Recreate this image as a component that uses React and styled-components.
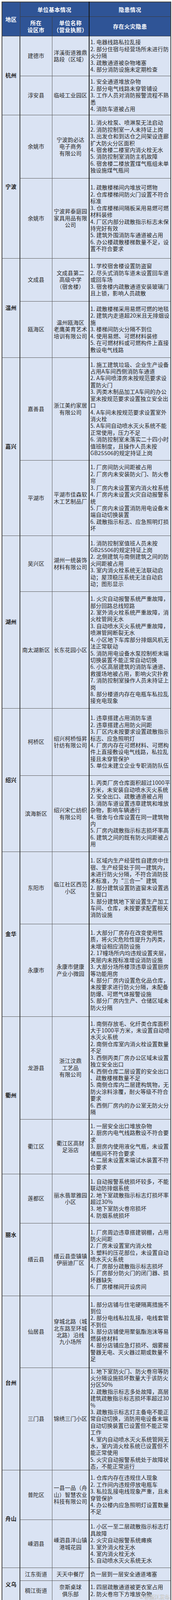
import React from 'react';
import styled, { createGlobalStyle } from 'styled-components';

const GlobalStyle = createGlobalStyle`
  html, body {
    margin: 0;
    padding: 0;
    background: #fff;
  }
  body {
    font-family: "Noto Sans CJK SC", "Liberation Sans", sans-serif;
  }
`;

const Page = styled.div`
  position: relative;
  width: 440px;
  padding: 4px 0 5px 4px;
  box-sizing: border-box;
`;

const Table = styled.table`
  width: 432px;
  border-collapse: collapse;
  table-layout: fixed;
  border: 2px solid #444;
`;

const Col = styled.col`
  width: ${p => p.$w}px;
`;

const Row = styled.tr`
  height: ${p => p.$h}px;
`;

const HeadCell = styled.th`
  background: #2f5496;
  color: #fff;
  font-size: 14px;
  font-weight: 700;
  letter-spacing: 0.5px;
  line-height: 18px;
  text-align: center;
  vertical-align: middle;
  white-space: pre;
  padding: 0;
  border: 1px solid #3b3b3b;
  border-left-width: ${p => (p.$strong ? 2 : 1)}px;
  border-left-color: ${p => (p.$strong ? '#111' : '#3b3b3b')};
`;

const Cell = styled.td`
  background: #dae3f3;
  color: #262626;
  font-size: 14px;
  letter-spacing: 0.25px;
  line-height: 17.4px;
  vertical-align: middle;
  white-space: pre;
  overflow: hidden;
  padding: 0;
  border: 1px solid #585858;
`;

const RegionCell = styled(Cell)`
  font-weight: 700;
  color: #1e1e1e;
  text-align: center;
  border-right: 2px solid #3a3a3a;
`;

const CityCell = styled(Cell)`
  text-align: center;
`;

const UnitCell = styled(Cell)`
  text-align: center;
`;

const IssueCell = styled(Cell)`
  text-align: left;
  padding-left: 2px;
  border-left: 2px solid #111;
`;

const Watermark = styled.div`
  position: absolute;
  right: 6px;
  bottom: 7px;
  display: flex;
  align-items: center;
  gap: 1px;
  font-size: 13px;
  color: rgba(255, 255, 255, 0.85);
  text-shadow: 0 0 1px #8a8a8a, 0 0 1px #8a8a8a;
  pointer-events: none;
`;

const data = [
  {
    region: '杭州',
    rows: [
      {
        h: 102,
        city: '建德市',
        unit: '洋溪街道雅鼎\n路段（区域）',
        issues: '1. 电器线路私拉乱接\n2. 部分住宿与经营场所未进行防\n火分隔\n3. 疏散通道被杂物堵塞\n4. 部分消防设施未定期检查',
      },
      {
        h: 100,
        city: '淳安县',
        unit: '临岐工业园区',
        issues: '1. 安全通道堆放杂物\n2. 部分电气线路未穿管铺设\n3. 工作人员对消防报警流程不熟\n悉\n4. 消防车道被占用',
      },
    ],
  },
  {
    region: '宁波',
    rows: [
      {
        h: 162,
        city: '余姚市',
        unit: '宁波韵必达\n电子商务\n有限公司',
        issues: '1. 消火栓泵、喷淋泵无法启动\n2. 消防控制室一人未持证上岗\n3. 出发仓和到达仓之间架设连廊\n扩大防火分区面积\n4. 宿舍楼二楼室内消火栓无水\n5. 消防控制室消防主机故障\n6. 宿舍楼二楼放置煤气瓶组未单\n独设施煤气瓶间',
      },
      {
        h: 205,
        city: '余姚市',
        unit: '宁波昇泰庭园\n家具用品有限\n公司',
        issues: '1. 疏散楼梯间内堆放可燃物\n2. 仓库楼梯间防火门设置不符合\n标准\n3. 仓库楼梯间隔板采用易燃可燃\n材料装修\n4. 厂区内部分疏散指示标志未保\n持完好有效\n5. 建筑外围消防车通道被占用\n6. 办公楼疏散楼梯数量不足，设\n置不符合要求',
      },
    ],
  },
  {
    region: '温州',
    rows: [
      {
        h: 110,
        city: '文成县',
        unit: '文成县第二\n高级中学\n（宿舍楼）',
        issues: '1. 学校宿舍楼设置防盗窗\n2. 尽头式消防车道未设置回车道\n或回车场\n3. 宿舍楼内疏散通道安装玻璃门\n且上锁，影响人员疏散',
      },
      {
        h: 144,
        city: '瓯海区',
        unit: '温州瓯海区\n老鹰美育艺术\n培训有限公司',
        issues: '1. 疏散楼梯采用易燃可燃的地毯\n2. 建筑内走道超20米且无排烟设\n施\n3. 楼梯间防火分隔不到位\n4. 使用易燃、可燃材料装修\n5. 在可燃材料或可燃构件上直接\n敷设电气线路',
      },
    ],
  },
  {
    region: '嘉兴',
    rows: [
      {
        h: 263,
        city: '嘉善县',
        unit: '浙江美约家居\n有限公司',
        issues: '1. 施工建筑垃圾、企业生产设备\n占用A车间西侧消防车通道\n2. A车间喷漆房未按规范要求设\n置防火门\n3. 丙类木制品加工A车间的办公\n室未按规范要求设置独立安全出\n口\n4. A车间未按规范要求设置室外\n消火栓\n5. A车间自动喷水灭火系统不能\n正常使用，压力不足\n6. 消防控制室未落实二十四小时\n值班制度，且操作人员未按\nGB25506的规定持证上岗',
      },
      {
        h: 193,
        city: '平湖市',
        unit: '平湖市佳森软\n木工艺制品厂',
        issues: '1. 厂房间防火间距被占用\n2. 厂房内未安装防火门、防火卷\n帘\n3. 厂房内未设置室内消火栓系统\n4. 厂房内未设置火灾自动报警系\n统\n5. 厂房内未设置消防用电设备末\n端自动切换装置\n6. 疏散指示标志、应急照明灯损\n坏',
      },
    ],
  },
  {
    region: '湖州',
    rows: [
      {
        h: 143,
        city: '吴兴区',
        unit: '湖州一统装饰\n材料有限公司',
        issues: '1. 消防控制室值班人员未按\nGB25506的规定持证上岗\n2. 北侧建筑与南侧建筑之间的防\n火间距被占用\n3. 室内消火栓系统无法联动启\n动；屋顶稳压系统无法自动启\n动；图形显示',
      },
      {
        h: 299,
        city: '南太湖新区',
        unit: '长东花园小区',
        issues: '1. 火灾自动报警系统严重故障，\n部分回路总线短路\n2. 室外消火栓系统严重故障，消\n火栓管网无水\n3. 自动喷水灭火系统严重故障，\n喷淋管网断裂无水\n4. 小区地下车库部分排烟风机无\n法正常联动\n5. 消防用电设备水泵控制柜末端\n切换装置不能正常自动切换\n6. 小区高层建筑的消防车通道、\n救援场地被占用，影响火灾扑救\n7. 消防控制室操作人员未持证上\n岗\n8. 部分楼道内存在电瓶车私拉乱\n接充电现象',
      },
    ],
  },
  {
    region: '绍兴',
    rows: [
      {
        h: 172,
        city: '柯桥区',
        unit: '绍兴柯桥恒昇\n针纺有限公司',
        issues: '1. 违章搭建占用消防车道\n2. 违章搭建占用防火间距\n3. 厂区内未按要求设置疏散指示\n标志、应急照明灯\n4. 厂房内存在可燃材料、可燃构\n件上直接敷设电气线路，私拉乱\n接且未穿管保护\n5. 单位未建立企业专职消防队伍',
      },
      {
        h: 195,
        city: '滨海新区',
        unit: '绍兴宋仁纺织\n有限公司',
        issues: '1. 丙类厂房仓库面积超过1000平\n方米，未安装自动喷水灭火系统\n2. 安全出口、疏散通道被占用\n3. 消防车道设置违章建筑和堆放\n杂物，影响车辆通行\n4. 宿舍与仓库设置在同一建筑物\n内\n5. 厂房内疏散指示标志损坏率高\n6. 建筑之间的既有防火间距被占\n用',
      },
    ],
  },
  {
    region: '金华',
    rows: [
      {
        h: 185,
        city: '东阳市',
        unit: '临江社区西范\n小区',
        issues: '1. 区域内生产经营性自建房中住\n宿、生产经营处于同一建筑内，\n未进行防火分隔，不符合消防技\n术标准，为“三合一”建筑\n2. 部分建筑设置防盗窗未设置逃\n生窗口\n3. 部分建筑地下室设置生产加工\n车间、仓库，未按要求配置相关\n消防设施',
      },
      {
        h: 237,
        city: '永康市',
        unit: '永康市健康\n产业小微园',
        issues: '1. 大部分厂房存在改变使用性\n质，将火灾危险性提升为丙类，\n未增设相应消防设施\n2. 17幢场所内均违规设置夹层，\n夹层内未按标准增设消防设施\n3. 大部分场所楼顶违章设置厨房\n等功能用房\n4. 部分厂房内设置危化品仓库，\n未按要求进行防火分隔，未配备\n防爆、可燃气体报警设施\n5. 部分厂房内生产、仓储区域未\n防火分隔',
      },
    ],
  },
  {
    region: '衢州',
    rows: [
      {
        h: 263,
        city: '龙游县',
        unit: '浙江汶鼎\n工艺品\n有限公司',
        issues: '1. 南侧存放毛、化纤类仓库面积\n大于1000平方米，未设置自动喷\n水灭火系统\n2. 南侧仓库室内消火栓设置数量\n不足\n3. 西侧丙类厂房办公区域未设置\n独立安全出口\n4. 西侧仓库二层设置的安全出口\n、疏散楼梯数量不足\n5. 南侧仓库内二层建构筑物，无\n防火涂料涂覆，耐火等级不符合\n要求\n6. 西侧厂房内的办公室无防火分\n隔',
      },
      {
        h: 140,
        city: '衢江区',
        unit: '衢江区高财\n足浴店',
        issues: '1. 一层安全出口堆放杂物\n2. 厨房内电气线路敷设不符合要\n求\n3. 厨房内使用液化气瓶，未设置\n储瓶间不符合要求\n4. 二层未设置末端试水装置不符\n合要求',
      },
    ],
  },
  {
    region: '丽水',
    rows: [
      {
        h: 126,
        city: '莲都区',
        unit: '丽水翡翠雅园\n小区',
        issues: '1. 自动报警系统损坏较多，不能\n联动防排烟系统\n2. 地下室疏散指示标志灯损坏率\n超过30%\n3. 地下室防火卷帘损坏\n4. 防烟系统损坏',
      },
      {
        h: 186,
        city: '缙云县',
        unit: '缙云县壶镇镇\n伊丽迪厂区',
        issues: '1. 厂房周边违章搭建钢棚，占用\n防火间距\n2. 厂房未设置室内消火栓\n3. 塑料的压花部位，未设置自动\n喷水灭火系统\n4. 厂房部分疏散指示标志损坏\n5. 厂房部分防火门的闭门器、损\n坏器缺失\n6. 厂房楼梯间开设房间',
      },
    ],
  },
  {
    region: '台州',
    rows: [
      {
        h: 184,
        city: '仙居县',
        unit: '穿城北路（城\n北东路至环城\n北路）沿线\n九小场所',
        issues: '1. 部分店铺与住宅硬隔离措施不\n到位\n2. 部分电线私拉乱接，电线套管\n不到位\n3. 部分店铺使用聚氨酯泡沫等易\n燃装修材料\n4. 部分店铺应急灯损坏、烟雾报\n警器无电、灭火器过期或数量不\n足',
      },
      {
        h: 262,
        city: '三门县',
        unit: '锦绣三门小区',
        issues: '1. 地下室防火门、防火卷帘等防\n火分隔设施损坏数量大于该防火\n分区50%\n2. 疏散指示标志多处故障，高层\n建筑疏散指示标志损坏率超过30\n%\n3. 疏散指示标志灯主备电不能正\n常自动切换，消防用电设备末端\n自动切换装置已设置但不能正常\n工作\n4. 室内自动喷水灭火系统管网无\n水，室内消火栓系统已设置但不\n能正常使用\n5. 火灾自动报警系统处于故障状\n态，不能正常运行',
      },
    ],
  },
  {
    region: '舟山',
    rows: [
      {
        h: 127,
        city: '普陀区',
        unit: '一县一品（舟\n山）智慧农业\n科技有限公司',
        issues: '1. 仓库内存在违规住人现象\n2. 工作间内违规停放电瓶车\n3. 私拉乱接电线现象严重，且未\n穿管保护\n4. 办公楼内应急照明灯设置数量\n不足',
      },
      {
        h: 123,
        city: '嵊泗县',
        unit: '嵊泗县洋山镇\n港城花园',
        issues: '1. 小区一至二层疏散指示标志灯\n具故障\n2. 火灾自动报警系统瘫痪\n3. 室外消火栓无水\n4. 室内消火栓无水\n5. 自动喷水灭火系统无水',
      },
    ],
  },
  {
    region: '义乌',
    rows: [
      {
        h: 33,
        city: '江东街道',
        unit: '天天中餐厅',
        issues: '负一层到一层安全通道堵塞',
      },
      {
        h: 52,
        city: '稠江街道',
        unit: '奈斯桌球\n俱乐部',
        issues: '1. 四层疏散通道被更衣室占用\n2. 防火卷帘下方堆放杂物',
      },
    ],
  },
];

const WeiboMark = () => (
  <svg width="13" height="11" viewBox="0 0 26 22">
    <path
      d="M10.5 5.5c-4.5 1.6-8.6 5.4-8.6 8.6 0 3.6 4.6 6 9.5 6 6.4 0 10.6-3.6 10.6-6.3 0-1.9-1.6-2.8-3-3.2.4-1.2.5-2.6-.6-3.3-1.3-.8-3.6.1-3.6.1.7-2.1-.5-3.2-4.3-1.9z"
      fill="rgba(255,255,255,0.8)"
      stroke="#8a8a8a"
      strokeWidth="1.4"
    />
    <ellipse cx="11" cy="14.5" rx="4.2" ry="3" fill="none" stroke="#8a8a8a" strokeWidth="1.3" />
  </svg>
);

const App = () => {
  return (
    <Page>
      <GlobalStyle />
      <Table>
        <colgroup>
          <Col $w={46} />
          <Col $w={82} />
          <Col $w={95} />
          <Col $w={209} />
        </colgroup>
        <thead>
          <Row $h={37}>
            <HeadCell rowSpan={2}>地区</HeadCell>
            <HeadCell colSpan={2}>单位基本情况</HeadCell>
            <HeadCell $strong>隐患情况</HeadCell>
          </Row>
          <Row $h={50}>
            <HeadCell>{'所在\n设区市'}</HeadCell>
            <HeadCell>{'单位名称\n（营业执照）'}</HeadCell>
            <HeadCell $strong>存在火灾隐患</HeadCell>
          </Row>
        </thead>
        <tbody>
          {data.map(group =>
            group.rows.map((row, i) => (
              <Row key={group.region + i} $h={row.h}>
                {i === 0 && (
                  <RegionCell rowSpan={group.rows.length}>{group.region}</RegionCell>
                )}
                <CityCell>{row.city}</CityCell>
                <UnitCell>{row.unit}</UnitCell>
                <IssueCell>{row.issues}</IssueCell>
              </Row>
            ))
          )}
        </tbody>
      </Table>
      <Watermark>
        <WeiboMark />
        <span>@浙江发布</span>
      </Watermark>
    </Page>
  );
};

export default App;
